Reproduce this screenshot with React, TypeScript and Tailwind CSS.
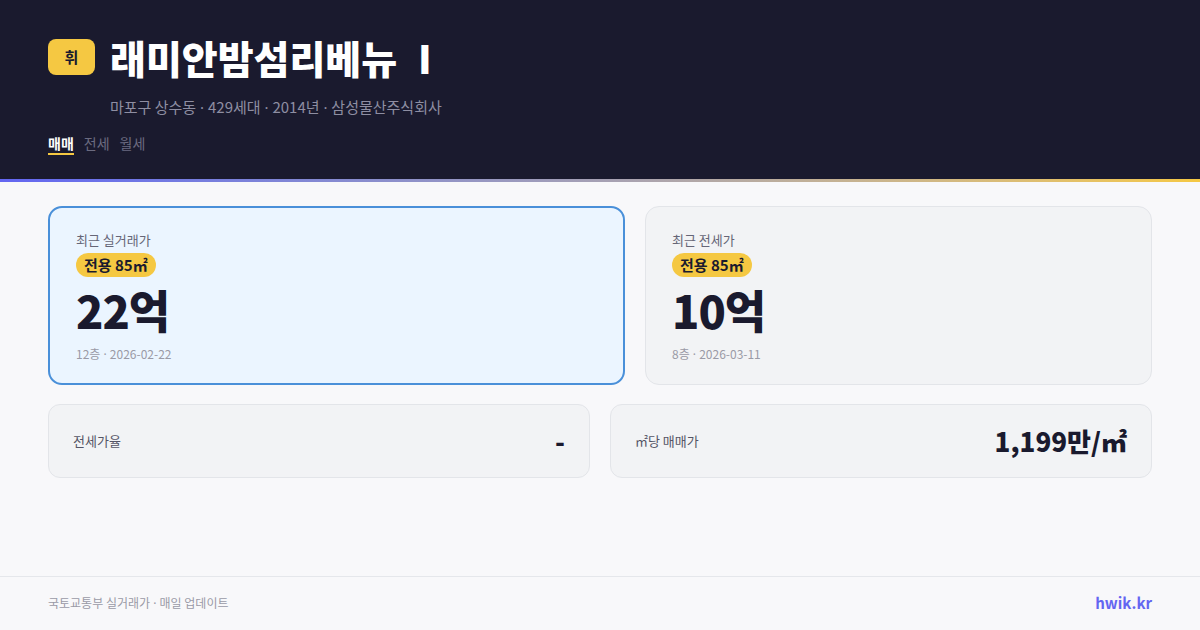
const font = { fontFamily: '"Noto Sans CJK KR", "Noto Sans", sans-serif' };
const dotFont = { fontFamily: '"Noto Sans", sans-serif' };

function Dot() {
  return <span style={dotFont}> · </span>;
}

interface PriceCardProps {
  label: string;
  area: string;
  price: string;
  floor: string;
  date: string;
  active?: boolean;
}

function PriceCard({ label, area, price, floor, date, active }: PriceCardProps) {
  return (
    <div
      className={
        active
          ? "flex flex-col rounded-[14px] border-2 border-[#4a90d9] bg-[#ebf5ff] px-[26px] pt-[23px]"
          : "flex flex-col rounded-[14px] border border-[#e3e5e9] bg-[#f2f3f5] px-[26px] pt-[24px]"
      }
    >
      <div className="text-[13px] leading-[18px] text-[#666677]">{label}</div>
      <div className="mt-[4px] self-start rounded-full bg-[#f5c842] px-[8px] text-[15px] font-bold leading-[24px] text-[#1a1a2e]">
        {area}
      </div>
      <div className="mt-[9px] text-[45px] font-black leading-[48px] tracking-[-1px] text-[#1a1a2e]">
        {price}
      </div>
      <div className="mt-[12px] text-[12px] leading-[16px] text-[#9a9aa6]">
        {floor}
        <Dot />
        {date}
      </div>
    </div>
  );
}

interface StatCardProps {
  label: string;
  value: string;
}

function StatCard({ label, value }: StatCardProps) {
  return (
    <div className="flex h-[74px] items-center justify-between rounded-[12px] border border-[#e3e5e9] bg-[#f2f3f5] px-6">
      <span className="text-[13px] text-[#555566]">{label}</span>
      <span className="text-[26px] font-black leading-none text-[#1a1a2e]">{value}</span>
    </div>
  );
}

export default function App() {
  return (
    <div className="flex h-[630px] w-[1200px] flex-col bg-[#f8f8fa]" style={font}>
      <header className="bg-[#1a1a2e] px-12 pt-[39px] pb-[24px]">
        <div className="flex h-9 items-center gap-[15px]">
          <div className="flex h-9 w-[47px] items-center justify-center rounded-lg bg-[#f5c842] text-[15px] font-bold text-[#1a1a2e]">
            휘
          </div>
          <h1 className="text-[39px] font-black leading-none text-white">
            래미안밤섬리베뉴<span className="ml-[21px]">I</span>
          </h1>
        </div>
        <div className="mt-[22px] pl-[62px] text-[15px] leading-5 text-[#8e8ea2]">
          마포구 상수동<Dot />429세대<Dot />2014년<Dot />삼성물산주식회사
        </div>
        <div className="mt-4 flex gap-[10px] text-[14px] leading-5">
          <span className="border-b-2 border-[#f5c842] font-bold text-white">매매</span>
          <span className="text-[#6b6b80]">전세</span>
          <span className="text-[#6b6b80]">월세</span>
        </div>
      </header>
      <div className="h-[3px] bg-linear-to-r from-[#6366f1] to-[#f5c842]" />

      <main className="flex-1 px-12 pt-6">
        <div className="grid h-[179px] grid-cols-[577px_1fr] gap-5">
          <PriceCard label="최근 실거래가" area="전용 85㎡" price="22억" floor="12층" date="2026-02-22" active />
          <PriceCard label="최근 전세가" area="전용 85㎡" price="10억" floor="8층" date="2026-03-11" />
        </div>
        <div className="mt-[19px] grid grid-cols-2 gap-5">
          <StatCard label="전세가율" value="-" />
          <StatCard label="㎡당 매매가" value="1,199만/㎡" />
        </div>
      </main>

      <footer className="flex h-[54px] items-center justify-between border-t border-[#e5e7eb] px-12">
        <span className="text-[12px] text-[#9a9aa6]">
          국토교통부 실거래가<Dot />매일 업데이트
        </span>
        <span className="text-[15px] font-bold text-[#6366f1]">hwik.kr</span>
      </footer>
    </div>
  );
}
